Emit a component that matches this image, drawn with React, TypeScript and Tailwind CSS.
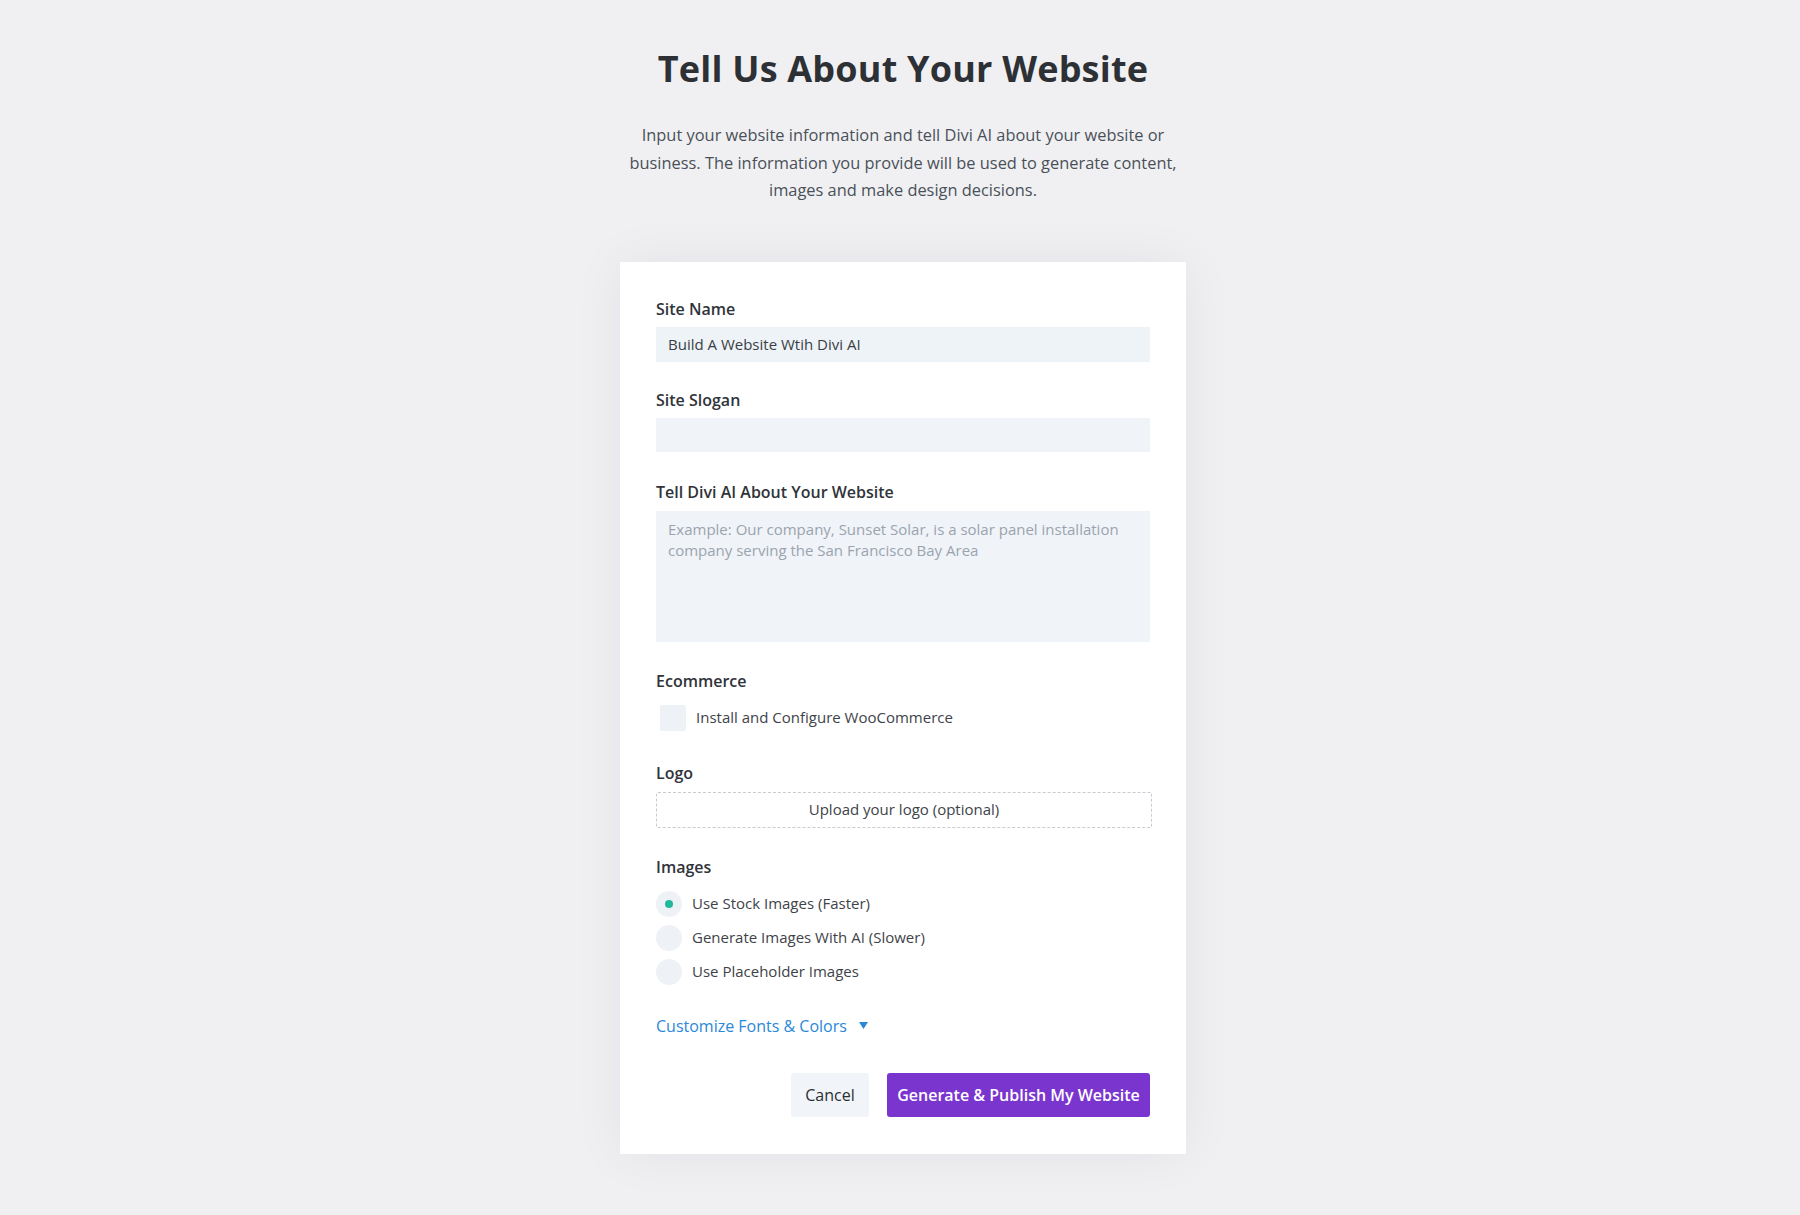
import React from "react";

const font = { fontFamily: '"Open Sans", "Noto Sans", sans-serif' };

function Label({ children, mb = "mb-[7px]" }: { children: React.ReactNode; mb?: string }) {
  return (
    <div className={`text-[16px] leading-[22px] font-semibold text-[#30343a] ${mb}`}>{children}</div>
  );
}

function Radio({ checked, label }: { checked?: boolean; label: string }) {
  return (
    <div className="flex items-center h-[34px]">
      <div className="w-[26px] h-[26px] rounded-full bg-[#eef1f5] flex items-center justify-center">
        {checked && <div className="w-[8px] h-[8px] rounded-full bg-[#20b99d]" />}
      </div>
      <span className="ml-[10px] text-[15px] text-[#3e4349] font-medium">{label}</span>
    </div>
  );
}

export default function App() {
  return (
    <div style={font} className="min-h-[1215px] w-full bg-[#f0f0f2] flex flex-col items-center pt-[46px] pl-[6px]">
      <h1 className="text-[36px] leading-[46px] font-bold text-[#2d3035] tracking-[0.2px]">Tell Us About Your Website</h1>
      <p className="mt-[29px] w-[570px] text-center text-[16.4px] leading-[27.5px] text-[#4a5059] font-medium">
        Input your website information and tell Divi AI about your website or business. The information you provide will be used to generate content, images and make design decisions.
      </p>
      <div className="mt-[58px] w-[566px] bg-white shadow-[0_0_50px_rgba(30,40,90,0.06)] px-[36px] pt-[36px] pb-[37px]">
        <Label>Site Name</Label>
        <div className="h-[35px] bg-[#eef3f8] flex items-center px-[12px] text-[15px] text-[#3a3f45] font-medium">
          Build A Website Wtih Divi AI
        </div>

        <div className="mt-[27px]">
          <Label>Site Slogan</Label>
          <div className="h-[34px] bg-[#f0f3f7]" />
        </div>

        <div className="mt-[29px]">
          <Label mb="mb-[8px]">Tell Divi AI About Your Website</Label>
          <div className="h-[131px] bg-[#f0f3f7] px-[12px] pt-[8px] text-[15px] leading-[21px] text-[#9aa4b0] font-medium">
            Example: Our company, Sunset Solar, is a solar panel installation company serving the San Francisco Bay Area
          </div>
        </div>

        <div className="mt-[28px]">
          <Label mb="mb-[11px]">Ecommerce</Label>
          <div className="flex items-center h-[30px]">
            <div className="ml-[4px] w-[26px] h-[26px] bg-[#eef1f5] rounded-[2px]" />
            <span className="ml-[10px] text-[15px] text-[#3e4349] font-medium">Install and Configure WooCommerce</span>
          </div>
        </div>

        <div className="mt-[29px]">
          <Label mb="mb-[8px]">Logo</Label>
          <div className="h-[36px] border border-dashed border-[#c8ccd2] rounded-[2px] flex items-center justify-center text-[15px] text-[#3e4349] font-medium w-[496px]">
            Upload your logo (optional)
          </div>
        </div>

        <div className="mt-[28px]">
          <Label mb="mb-[9px]">Images</Label>
          <div>
            <Radio checked label="Use Stock Images (Faster)" />
            <Radio label="Generate Images With AI (Slower)" />
            <Radio label="Use Placeholder Images" />
          </div>
        </div>

        <div className="mt-[26px] flex items-center text-[16px] leading-[22px] font-medium text-[#2a88d8]">
          Customize Fonts &amp; Colors
          <svg className="ml-[12px]" width="9" height="7" viewBox="0 0 9 7">
            <path d="M0 0 H9 L4.5 7 Z" fill="#2a88d8" />
          </svg>
        </div>

        <div className="mt-[36px] flex justify-end gap-[18px]">
          <button className="h-[44px] w-[78px] bg-[#f1f4f8] rounded-[3px] text-[16px] font-medium text-[#2b2f33]">Cancel</button>
          <button className="h-[44px] w-[263px] bg-[#7b35cf] rounded-[3px] text-[16px] font-semibold text-white">Generate &amp; Publish My Website</button>
        </div>
      </div>
    </div>
  );
}
